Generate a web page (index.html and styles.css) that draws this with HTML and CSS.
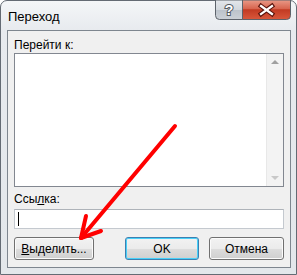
FILE: index.html
```html
<!DOCTYPE html>
<html lang="ru">
<head>
    <meta charset="UTF-8">
    <title>Переход</title>
    <link rel="stylesheet" href="styles.css">
</head>
<body>
    <div class="window">
        <div class="titlebar">
            <span class="title">Переход</span>
            <svg class="controls" width="76" height="20" viewBox="0 0 76 20">
                <defs>
                    <linearGradient id="help-bg" x1="0" y1="0" x2="0" y2="1">
                        <stop offset="0" stop-color="#e4e7eb"/>
                        <stop offset="0.5" stop-color="#d2d7dd"/>
                        <stop offset="0.52" stop-color="#bcc3cb"/>
                        <stop offset="1" stop-color="#ccd1d7"/>
                    </linearGradient>
                    <linearGradient id="close-bg" x1="0" y1="0" x2="0" y2="1">
                        <stop offset="0" stop-color="#e99a88"/>
                        <stop offset="0.45" stop-color="#d7644e"/>
                        <stop offset="0.5" stop-color="#c23a22"/>
                        <stop offset="1" stop-color="#d9583c"/>
                    </linearGradient>
                </defs>
                <path d="M0.5 0 V15.5 Q0.5 19.5 4.5 19.5 H27.5 V0 Z" fill="url(#help-bg)" stroke="#5d636b"/>
                <path d="M27.5 0 V19.5 H71.5 Q75.5 19.5 75.5 15.5 V0 Z" fill="url(#close-bg)" stroke="#5d636b"/>
                <text x="14" y="15" text-anchor="middle" font-family="Liberation Sans, Arial, sans-serif" font-size="14" font-weight="bold" fill="#fff" stroke="#555b63" stroke-width="2" paint-order="stroke">?</text>
                <path d="M46 6 L57 14 M57 6 L46 14" stroke="#5a140c" stroke-width="4.5" stroke-linecap="square"/>
                <path d="M46 6 L57 14 M57 6 L46 14" stroke="#fff" stroke-width="2.2" stroke-linecap="square"/>
            </svg>
        </div>

        <div class="client">
            <label class="label">Перейти к:</label>
            <div class="listbox">
                <div class="list-items"></div>
                <div class="scrollbar">
                    <span class="arrow arrow-up"></span>
                    <span class="arrow arrow-down"></span>
                </div>
            </div>

            <label class="label label-link">Ссы<u>л</u>ка:</label>
            <div class="textbox"><span class="caret"></span></div>

            <div class="actions">
                <button class="btn"><u>В</u>ыделить...</button>
                <button class="btn btn-default">OK</button>
                <button class="btn">Отмена</button>
            </div>
        </div>

        <!-- red annotation arrow drawn over the dialog -->
        <svg class="annotation" width="297" height="275" viewBox="0 0 297 275">
            <g stroke="#ff0000" stroke-width="4" stroke-linecap="round" fill="none">
                <line x1="175" y1="126" x2="81" y2="238"/>
                <line x1="81" y1="238" x2="86" y2="216"/>
                <line x1="81" y1="238" x2="101" y2="231"/>
            </g>
        </svg>
    </div>
</body>
</html>
```
FILE: styles.css
```css
* { margin: 0; padding: 0; box-sizing: border-box; }
body { font-family: "Liberation Sans", Arial, sans-serif; font-size: 12px; color: #000; background: #fff; }

.window { position: relative; width: 297px; height: 275px; border: 1px solid #646b74; border-radius: 7px 7px 0 0; background: linear-gradient(#f4f6f8, #e7eaee 30px, #e3e7eb); padding: 0 5px 6px 6px; display: flex; flex-direction: column; }

.titlebar { height: 29px; display: flex; justify-content: space-between; align-items: flex-start; }
.title { padding: 8px 0 0 1px; font-size: 13px; color: #000; }
.controls { display: block; flex: none; margin-top: -1px; }

.client { flex: 1; border: 1px solid #7e868f; background: #f0f0f0; padding: 6px 6px 7px 6px; display: flex; flex-direction: column; }
.label { display: block; height: 16px; line-height: 16px; }
.label u { text-decoration: underline; }
.listbox { height: 134px; border: 1px solid #828790; background: #fff; display: flex; }
.list-items { flex: 1; }
.scrollbar { width: 17px; background: #f3f3f3; border-left: 1px solid #e8e8e8; display: flex; flex-direction: column; justify-content: space-between; align-items: center; padding: 6px 0 6px 0; }
.arrow { width: 0; height: 0; border-left: 4px solid transparent; border-right: 4px solid transparent; }
.arrow-up { border-bottom: 4px solid #a0a0a0; }
.arrow-down { border-top: 4px solid #c8c8c8; }

.label-link { margin-top: 4px; }
.textbox { height: 20px; margin-top: 2px; border: 1px solid #c4c9cf; border-top-color: #aeb3b9; background: #fff; padding: 2px 3px; }
.caret { display: block; width: 1px; height: 14px; background: #000; }

.actions { display: flex; gap: 10px; margin-top: auto; }
.btn { height: 23px; border: 1px solid #707070; border-radius: 3px; background: linear-gradient(#f2f2f2, #ebebeb 50%, #dddddd 51%, #cfcfcf); font-family: "Liberation Sans", Arial, sans-serif; font-size: 12px; color: #000; box-shadow: inset 0 0 0 1px #fbfbfb; }
.btn:first-child { width: 80px; margin-right: auto; }
.btn-default { width: 74px; border-color: #3c7fb1; box-shadow: inset 0 0 0 1px #48d0f8; }
.btn:last-child { width: 75px; }

.annotation { position: absolute; left: -1px; top: -1px; pointer-events: none; }
```
